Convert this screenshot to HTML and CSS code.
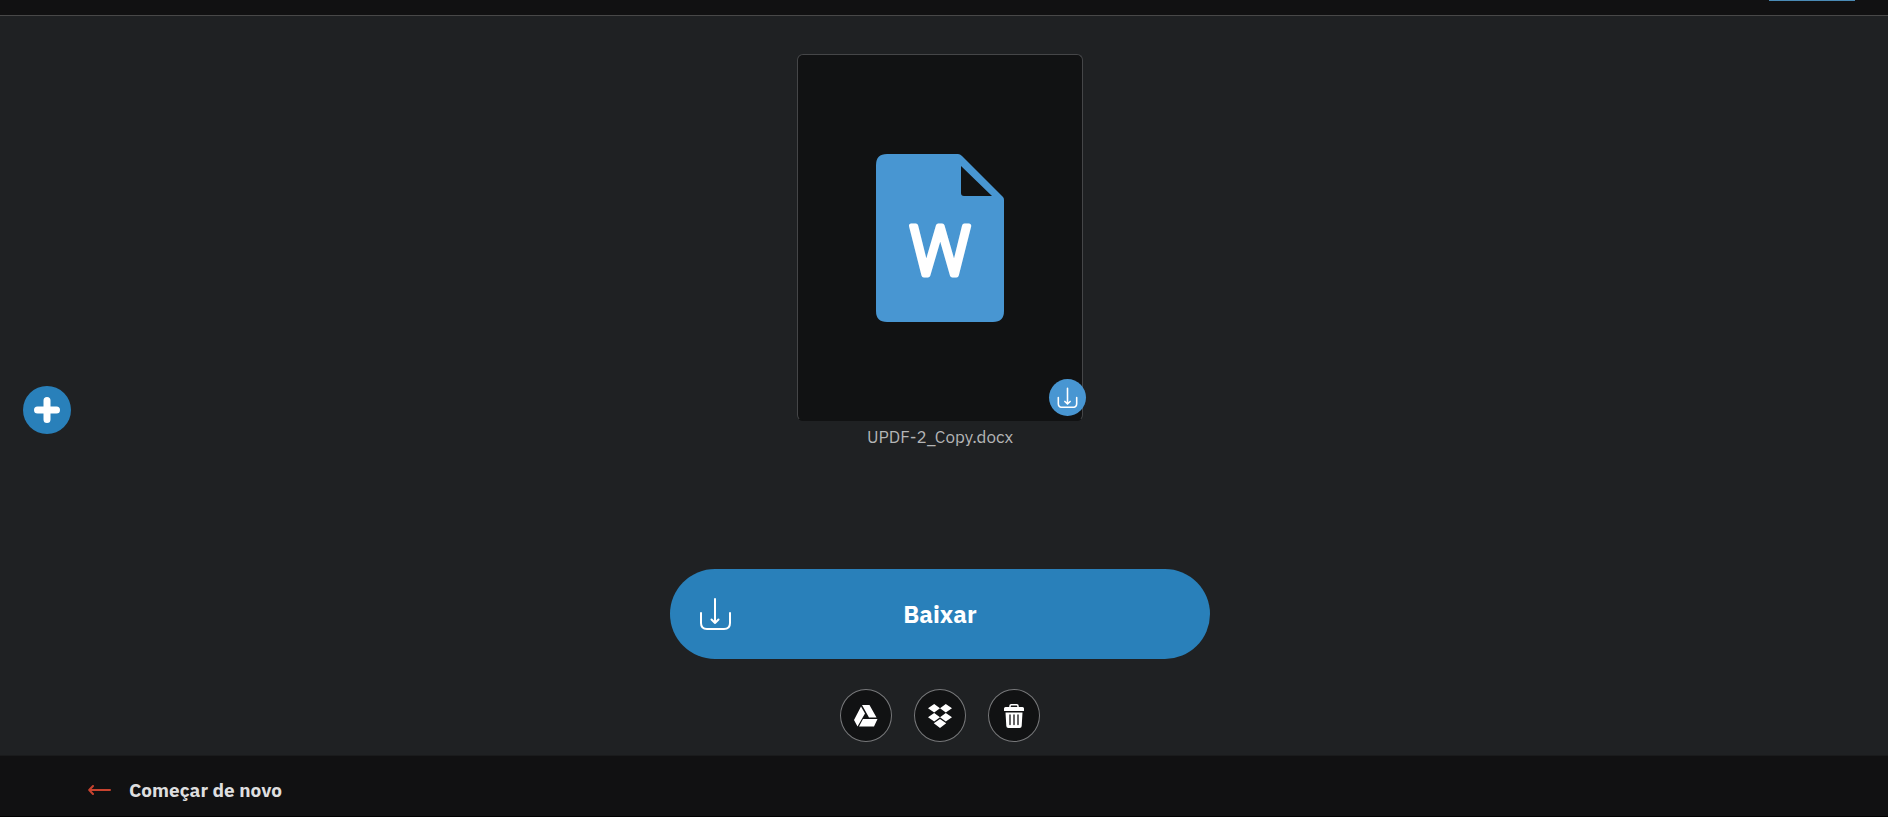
FILE: index.html
```
<!DOCTYPE html>
<html lang="pt">
<head>
    <meta charset="UTF-8">
    <meta name="viewport" content="width=device-width, initial-scale=1.0">
    <title>Baixar</title>
    <link rel="stylesheet" href="styles.css">
</head>
<body>
    <header class="topbar">
        <a href="#" class="topbar-btn" aria-label="Conta"></a>
    </header>

    <main class="content">
        <button type="button" class="add-btn" aria-label="Adicionar">
            <svg width="28" height="28" viewBox="0 0 28 28" fill="none" stroke="#fff" stroke-width="7" stroke-linecap="round">
                <path d="M14 4.500v19M4.500 14h19"/>
            </svg>
        </button>

        <figure class="file">
            <div class="file-card">
                <svg class="file-icon" width="128" height="168" viewBox="0 0 128 168">
                    <path fill="#4896d2" fill-rule="evenodd" d="M11 0H82Q84 0 86 2L127 43Q128 44 128 46V157Q128 168 117 168H11Q0 168 0 157V11Q0 0 11 0ZM85 12V39Q85 42 88 42H116Z"/>
                    <text class="file-letter" x="64" y="121" text-anchor="middle">W</text>
                </svg>
                <button type="button" class="file-download" aria-label="Baixar arquivo">
                    <svg width="21" height="21" viewBox="0 0 32 32" fill="none" stroke="#fff" stroke-width="2.400" stroke-linecap="round" stroke-linejoin="round">
                        <path d="M16 2v23M12 22l4 4 4-4M2 16v9q0 6 6 6h16q6 0 6-6v-9"/>
                    </svg>
                </button>
            </div>
            <figcaption class="file-name">UPDF-2_Copy.docx</figcaption>
        </figure>

        <div class="actions">
            <button type="button" class="download-btn">
                <svg width="32" height="32" viewBox="0 0 32 32" fill="none" stroke="#fff" stroke-width="2" stroke-linecap="round" stroke-linejoin="round">
                    <path d="M15 1v24M11.500 21.500l3.500 3.500 3.500-3.500M1 15v10q0 6 6 6h17q6 0 6-6v-10"/>
                </svg>
                <span>Baixar</span>
            </button>

            <div class="tools">
                <button type="button" class="tool-btn" aria-label="Google Drive">
                    <svg width="26" height="26" viewBox="0 0 26 26" fill="#fff">
                        <path d="M9 2h7.500l7 12.500h-7.500zM8 3.500l4 7-7.500 13-3.500-6.500zM10 16h14.500l-3.500 7.500h-15z"/>
                    </svg>
                </button>
                <button type="button" class="tool-btn" aria-label="Dropbox">
                    <svg width="26" height="26" viewBox="0 0 26 26" fill="#fff">
                        <path d="M7.200 1l5.800 4.300-5.800 4.300-6.200-4.300zM18.800 1l6.200 4.300-6.200 4.300-5.800-4.300zM7.200 10l5.800 4.300-5.800 4.300-6.200-4.300zM18.800 10l6.200 4.300-6.200 4.300-5.800-4.300zM13 16l6.200 4.300-6.200 4.700-6.200-4.700z"/>
                    </svg>
                </button>
                <button type="button" class="tool-btn" aria-label="Excluir">
                    <svg width="26" height="26" viewBox="0 0 26 26">
                        <path fill="none" stroke="#fff" stroke-width="1.500" d="M9 4.500V3q0-1.200 1.200-1.200h5.600q1.200 0 1.200 1.200v1.500"/>
                        <path fill="#fff" d="M4.500 4h17q1.500 0 1.500 1.500v2q0 .5-.5.500h-19q-.5 0-.5-.5v-2q0-1.500 1.500-1.500zM4.500 9.500h17l-.8 13.500q-.1 2-2.100 2h-11.200q-2 0-2.100-2z"/>
                        <path stroke="#111213" stroke-width="1.300" stroke-linecap="round" d="M9 12v9.500M13 12v9.500M17 12v9.500"/>
                    </svg>
                </button>
            </div>
        </div>
    </main>

    <footer class="bottombar">
        <a href="#" class="restart">
            <svg width="24" height="12" viewBox="0 0 24 12" fill="none" stroke="#c8432f" stroke-width="2" stroke-linecap="round" stroke-linejoin="round">
                <path d="M22 6H1.500M5 2L1.200 6l3.800 4"/>
            </svg>
            <span>Começar de novo</span>
        </a>
    </footer>
</body>
</html>
```

FILE: styles.css
```
* {
    box-sizing: border-box;
}

body {
    margin: 0;
    min-height: 100vh;
    display: flex;
    flex-direction: column;
    background-color: #1f2123;
    color: #fff;
    font-family: "IBM Plex Sans", Roboto, sans-serif;
}

button {
    border: none;
    padding: 0;
    color: inherit;
    font-family: inherit;
    cursor: pointer;
}

svg {
    display: block;
}

.topbar {
    display: flex;
    justify-content: flex-end;
    align-items: flex-start;
    height: 16px;
    padding-right: 33px;
    background-color: #111112;
    border-bottom: 1px solid #484848;
}

.topbar-btn {
    width: 86px;
    height: 1px;
    background-color: #4a8ab5;
}

.content {
    flex: 1;
    display: flex;
    flex-direction: column;
    align-items: center;
    position: relative;
    padding: 38px 8px 13px 0;
}

/* Floating add button */
.add-btn {
    position: absolute;
    left: 23px;
    top: 50%;
    display: grid;
    place-items: center;
    width: 48px;
    height: 48px;
    border-radius: 50%;
    background-color: #2980ba;
}

.file {
    margin: 0;
    text-align: center;
}

.file-card {
    position: relative;
    display: grid;
    place-items: center;
    width: 286px;
    height: 367px;
    background-color: #111213;
    border: 1px solid #454648;
    border-bottom-color: #111213;
    border-radius: 6px;
}

.file-letter {
    fill: #fff;
    stroke: #fff;
    stroke-width: 5px;
    stroke-linejoin: round;
    font-family: Roboto, sans-serif;
    font-size: 68px;
    font-weight: 300;
}

.file-download {
    position: absolute;
    right: -4px;
    bottom: 4px;
    display: grid;
    place-items: center;
    width: 37px;
    height: 37px;
    border-radius: 50%;
    background-color: #4896d2;
}

.file-name {
    margin-top: 4px;
    color: #b4b5b6;
    font-size: 17px;
    line-height: 24px;
}

.actions {
    display: flex;
    flex-direction: column;
    align-items: center;
    gap: 30px;
    margin-top: auto;
}

.download-btn {
    display: grid;
    grid-template-columns: 32px 1fr 32px;
    align-items: center;
    width: 540px;
    max-width: 100%;
    height: 90px;
    padding: 0 30px;
    border-radius: 45px;
    background-color: #2980ba;
    font-size: 24px;
    font-weight: 700;
}

.tools {
    display: flex;
    gap: 22px;
}

.tool-btn {
    display: grid;
    place-items: center;
    width: 52px;
    height: 53px;
    border: 1px solid #77787a;
    border-radius: 50%;
    background-color: #111213;
}

.bottombar {
    display: flex;
    align-items: center;
    height: 62px;
    padding: 8px 88px 0;
    background-color: #111112;
    border-top: 1px solid #1a1b1c;
    border-bottom: 1px solid #000;
}

.restart {
    display: flex;
    align-items: center;
    gap: 17px;
    color: #dededf;
    font-size: 19px;
    font-weight: 700;
    line-height: 24px;
    text-decoration: none;
}
```
